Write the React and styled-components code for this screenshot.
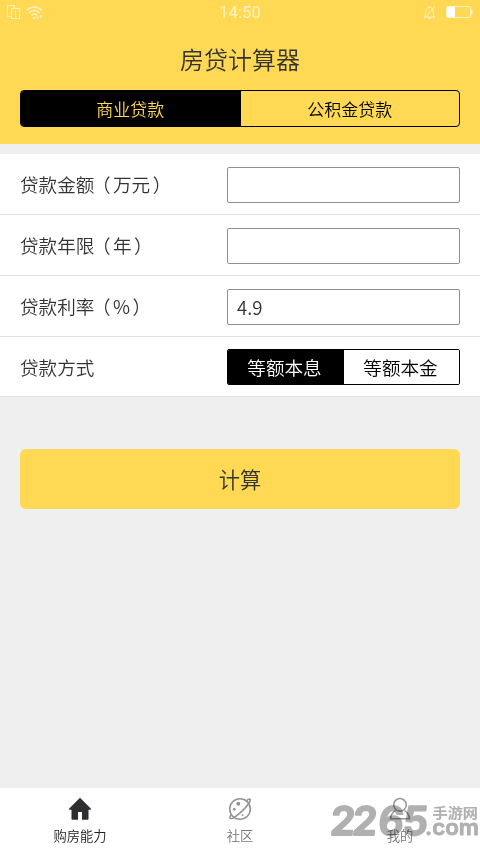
import React, { useState } from "react";
import styled, { createGlobalStyle } from "styled-components";

const GlobalStyle = createGlobalStyle`
  * { box-sizing: border-box; }
  body { margin: 0; background: #efefef; }
  button, input { font: inherit; color: inherit; margin: 0; padding: 0; border: 0; background: none; outline: none; }
`;

const Screen = styled.div`
  width: 480px;
  height: 853px;
  display: flex;
  flex-direction: column;
  background: #efefef;
  color: #333;
  font-family: "Noto Sans CJK SC", sans-serif;
  font-weight: 350;
  overflow: hidden;
`;

const Header = styled.header`
  height: 144px;
  background: #ffd954;
  flex: none;
`;

const StatusBar = styled.div`
  height: 25px;
  padding: 0 7px 0 7px;
  display: grid;
  grid-template-columns: 1fr auto 1fr;
  align-items: center;
  color: #fff3c4;
`;

const StatusGroup = styled.div`
  display: flex;
  align-items: center;
  gap: ${(p) => p.$gap}px;
  justify-content: ${(p) => (p.$end ? "flex-end" : "flex-start")};
`;

const Clock = styled.span`
  font: 400 16.5px/25px Roboto, sans-serif;
  letter-spacing: 0.2px;
`;

const Title = styled.h1`
  margin: 0 0 12px;
  padding-top: 16px;
  height: 53px;
  font-size: 24px;
  font-weight: inherit;
  line-height: 35px;
  text-align: center;
`;

const LoanTabs = styled.div`
  display: flex;
  margin: 0 20px;
  height: 37px;
  border: 1px solid #000;
  border-radius: 4px;
  overflow: hidden;
`;

const LoanTab = styled.button`
  flex: 1;
  font-size: 17px;
  line-height: 35px;
  color: ${(p) => (p.$active ? "#ffd954" : "#000")};
  background: ${(p) => (p.$active ? "#000" : "transparent")};
  & + & { border-left: 1px solid #000; }
`;

const Form = styled.section`
  margin-top: 10px;
  background: #fff;
  flex: none;
`;

const Row = styled.div`
  height: 60.85px;
  display: flex;
  align-items: center;
  justify-content: space-between;
  padding: 2px 20px 0;
  border-bottom: 1px solid #e0e0e0;
`;

const Label = styled.label`
  font-size: 18.6px;
  line-height: 28px;
  padding-bottom: 1px;
`;

const Bracket = styled.span`
  position: relative;
  left: ${(p) => (p.$close ? 2.5 : -2.5)}px;
`;

const Field = styled.input`
  && {
    width: 233px;
    height: 36px;
    padding: 0 9px;
    border: 1px solid #8e8e8e;
    border-radius: 2px;
    background: #fff;
    font-size: 18.6px;
  }
`;

const MethodSwitch = styled.div`
  display: flex;
  width: 233px;
  height: 36px;
  border: 1px solid #000;
  border-radius: 2px;
  overflow: hidden;
`;

const MethodOption = styled.button`
  flex: 1;
  font-size: 18.6px;
  line-height: 34px;
  color: ${(p) => (p.$active ? "#fff" : "#000")};
  background: ${(p) => (p.$active ? "#000" : "#fff")};
  && { padding-right: 2px; }
  & + & { border-left: 1px solid #000; }
`;

const SubmitButton = styled.button`
  && {
    flex: none;
    margin: 52px 20px 0;
    height: 60px;
    padding-bottom: 1px;
    border-radius: 6px;
    background: #ffd954;
    font-size: 21.3px;
  }
`;

const TabBar = styled.nav`
  position: relative;
  display: flex;
  flex: none;
  height: 65px;
  margin-top: auto;
  background: #fff;
`;

const NavItem = styled.button`
  flex: 1;
  display: flex;
  flex-direction: column;
  align-items: center;
  justify-content: flex-start;
  && { padding-top: 9px; }
  font-size: 13.3px;
  line-height: 20px;
  gap: 5px;
  color: ${(p) => (p.$active ? "#222" : "#777")};
  svg { display: block; }
`;

const Watermark = styled.svg`
  position: absolute;
  left: 328px;
  top: 8px;
  pointer-events: none;
  mix-blend-mode: multiply;
`;

const SimIcon = () => (
  <svg width="14" height="15" viewBox="0 0 14 15" fill="none" stroke="currentColor" strokeWidth="1">
    <path d="M3.5 11.5h-3V.5h7v2" />
    <path d="M4.500 3.500h8v10h-8z" />
    <path d="M8.500 5.500v4M8.500 10.500v1" />
  </svg>
);

const WifiIcon = () => (
  <svg width="17" height="14" viewBox="0 0 17 14" fill="none" stroke="currentColor" strokeWidth="1.5">
    <path d="M.7 4.3C5-.2 11.500-.2 15.800 4.300" />
    <path d="M3 7C6 3.800 10.500 3.800 13.500 7" />
    <path d="M5.300 9.500C7.200 7.500 9.300 7.500 11.200 9.500" />
    <circle cx="8.200" cy="12" r="1.200" fill="currentColor" stroke="none" />
    <path d="M12 13V10M10.800 11.500 12 13M14.800 9v3M16 10.500 14.800 9" strokeWidth="1" />
  </svg>
);

const MutedIcon = () => (
  <svg width="13" height="15" viewBox="0 0 13 15" fill="none" stroke="currentColor" strokeWidth="1">
    <path d="M1 12h11c-1.500-1.200-1.700-2.500-1.700-5.300C10.300 3.900 8.500 2.300 6.500 2.300S2.700 3.900 2.700 6.700C2.700 9.500 2.500 10.800 1 12zM5.200 13.500h2.600M6.500 1v1M11.500 1.500 1.800 13.500" />
  </svg>
);

const BatteryIcon = () => (
  <svg width="27" height="13" viewBox="0 0 27 13" fill="none">
    <rect x=".5" y=".5" width="24" height="11" rx="1" stroke="currentColor" />
    <rect x="1" y="1" width="8" height="10" fill="#fff" />
    <path d="M25.700 4v4.500" stroke="currentColor" strokeWidth="1.400" />
  </svg>
);

const HomeIcon = () => (
  <svg width="24" height="24" viewBox="0 0 24 24" fill="#2e2e30">
    <path d="M12 .8 23 11.800q.3.900-.6.900H20.500V22q0 .8-.8.800H14V15h-4v7.800H4.300q-.8 0-.8-.8V12.700H1.600q-.9 0-.6-.9z" />
  </svg>
);

const PlanetIcon = () => (
  <svg width="24" height="24" viewBox="0 0 24 24" fill="none" stroke="#949494" strokeWidth="1.600">
    <circle cx="12" cy="12" r="10.300" />
    <path d="M18.800 3.500C20.500 2.200 21.500 1.700 22 2.200 23.500 3.700 18.500 10 13.800 14.300 8.800 18.800 3.500 22.500 2.200 21.300 1.600 20.800 1.900 19.800 3 18" />
    <circle cx="10.300" cy="6.800" r="2" fill="#949494" stroke="none" />
    <circle cx="6.300" cy="12.300" r="1.400" fill="#949494" stroke="none" />
    <circle cx="14.600" cy="18" r=".9" fill="#949494" stroke="none" />
  </svg>
);

const PersonIcon = () => (
  <svg width="24" height="24" viewBox="0 0 24 24" fill="none" stroke="#999" strokeWidth="1.600">
    <circle cx="12" cy="7.800" r="6.300" />
    <path d="M7.500 13.600C4.500 15.100 2.900 17.800 2.500 21.800H21.500C21.100 17.800 19.500 15.100 16.500 13.600" />
  </svg>
);

const SiteMark = () => (
  <Watermark width="152" height="56" viewBox="0 0 152 56" fill="#b0b0b0">
    <g stroke="#b0b0b0" strokeLinejoin="round">
      <text x="1 23 49 73.500" y="39" transform="translate(4 0) skewX(-5)" fontFamily="Inter" fontWeight="600" fontSize="39.500" strokeWidth="2">2265</text>
      <text x="97" y="38.500" textLength="54" lengthAdjust="spacingAndGlyphs" fontFamily="Inter" fontWeight="600" fontSize="21" strokeWidth=".8">.com</text>
      <text x="104.500" y="22.300" textLength="45.500" lengthAdjust="spacingAndGlyphs" fontFamily="Noto Sans CJK SC" fontWeight="700" fontSize="13.800" strokeWidth=".1">手游网</text>
    </g>
  </Watermark>
);

const fields = [
  { id: "amount", name: "贷款金额", unit: "万元" },
  { id: "years", name: "贷款年限", unit: "年" },
  { id: "rate", name: "贷款利率", unit: "%", value: "4.9" },
];

const navItems = [
  { name: "购房能力", Icon: HomeIcon },
  { name: "社区", Icon: PlanetIcon },
  { name: "我的", Icon: PersonIcon },
];

export default function App() {
  const [loan, setLoan] = useState("商业贷款");
  const [method, setMethod] = useState("等额本息");
  return (
    <>
      <GlobalStyle />
      <Screen>
        <Header>
          <StatusBar>
            <StatusGroup $gap={5}><SimIcon /><WifiIcon /></StatusGroup>
            <Clock>14:50</Clock>
            <StatusGroup $gap={10} $end><MutedIcon /><BatteryIcon /></StatusGroup>
          </StatusBar>
          <Title>房贷计算器</Title>
          <LoanTabs>
            {["商业贷款", "公积金贷款"].map((t) => (
              <LoanTab key={t} $active={loan === t} onClick={() => setLoan(t)}>{t}</LoanTab>
            ))}
          </LoanTabs>
        </Header>
        <Form>
          {fields.map((f) => (
            <Row key={f.id}>
              <Label htmlFor={f.id}>{f.name}<Bracket>（</Bracket>{f.unit}<Bracket $close>）</Bracket></Label>
              <Field id={f.id} defaultValue={f.value} />
            </Row>
          ))}
          <Row>
            <Label as="span">贷款方式</Label>
            <MethodSwitch>
              {["等额本息", "等额本金"].map((m) => (
                <MethodOption key={m} $active={method === m} onClick={() => setMethod(m)}>{m}</MethodOption>
              ))}
            </MethodSwitch>
          </Row>
        </Form>
        <SubmitButton>计算</SubmitButton>
        <TabBar>
          {navItems.map(({ name, Icon }, i) => (
            <NavItem key={name} $active={i === 0}><Icon />{name}</NavItem>
          ))}
          <SiteMark />
        </TabBar>
      </Screen>
    </>
  );
}
